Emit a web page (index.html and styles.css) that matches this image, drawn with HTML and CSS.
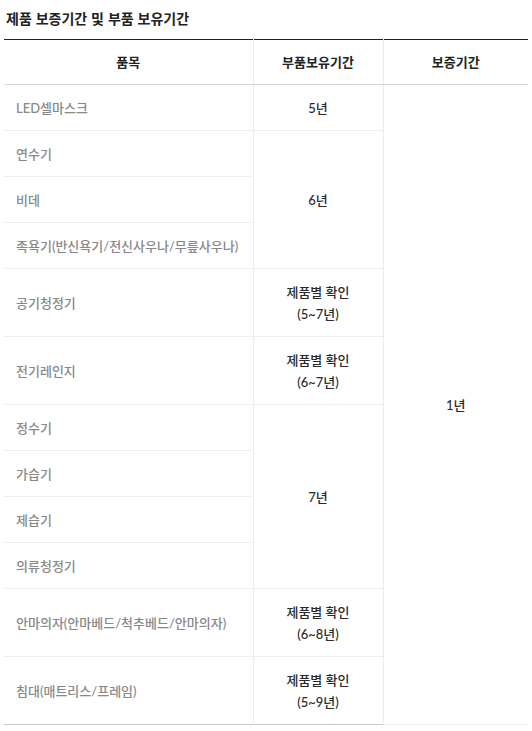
FILE: index.html
```html
<!DOCTYPE html>
<html lang="ko">
<head>
<meta charset="utf-8">
<link rel="stylesheet" href="styles.css">
</head>
<body>
<div class="wrap">
  <h3 class="title">제품 보증기간 및 부품 보유기간</h3>
  <table class="tbl">
    <colgroup>
      <col class="c1"><col class="c2"><col class="c3">
    </colgroup>
    <thead>
      <tr><th>품목</th><th>부품보유기간</th><th>보증기간</th></tr>
    </thead>
    <tbody>
      <tr><td class="item">LED셀마스크</td><td>5년</td><td rowspan="13" class="last">1년</td></tr>
      <tr><td class="item">연수기</td><td rowspan="3">6년</td></tr>
      <tr><td class="item">비데</td></tr>
      <tr><td class="item">족욕기(반신욕기/전신사우나/무릎사우나)</td></tr>
      <tr><td class="item">공기청정기</td><td>제품별 확인<br>(5~7년)</td></tr>
      <tr><td class="item">전기레인지</td><td>제품별 확인<br>(6~7년)</td></tr>
      <tr><td class="item">정수기</td><td rowspan="4">7년</td></tr>
      <tr><td class="item">가습기</td></tr>
      <tr><td class="item">제습기</td></tr>
      <tr><td class="item">의류청정기</td></tr>
      <tr><td class="item">안마의자(안마베드/척추베드/안마의자)</td><td>제품별 확인<br>(6~8년)</td></tr>
      <tr class="end"><td class="item">침대(매트리스/프레임)</td><td>제품별 확인<br>(5~9년)</td></tr>
    </tbody>
  </table>
</div>
</body>
</html>
```
FILE: styles.css
```css
html, body {
  margin: 0;
  padding: 0;
  background: #fff;
}
body {
  font-family: Lato, "Noto Sans CJK KR", sans-serif;
  color: #333;
}
.wrap {
  padding: 0 4px;
}
.title {
  margin: 0;
  padding: 8px 2px 0;
  height: 39px;
  box-sizing: border-box;
  font-size: 14px;
  font-weight: 700;
  line-height: 20px;
  color: #222;
  font-family: "Noto Sans CJK KR", sans-serif;
}
.tbl {
  width: 524px;
  border-collapse: collapse;
  table-layout: fixed;
  border-top: 1px solid #222;
  border-bottom: 1px solid #c8c8c8;
  font-size: 13px;
  line-height: 22px;
}
.c1 { width: 249px; }
.c2 { width: 130px; }
.c3 { width: 145px; }
.tbl th {
  padding: 11px 0 11px;
  font-weight: 700;
  color: #222;
  text-align: center;
  border-bottom: 1px solid #d4d4d4;
  border-left: 1px solid #ececec;
}
.tbl th:first-child { border-left: none; }
.tbl td {
  padding: 12px 0 11px;
  text-align: center;
  border-bottom: 1px solid #efefef;
  border-left: 1px solid #ececec;
  color: #2a2a2a;
  font-weight: 500;
  vertical-align: middle;
}
.tbl td.item {
  text-align: left;
  padding-left: 12px;
  color: #888;
  border-left: none;
}
.tbl tr.end td { border-bottom: none; }
```
